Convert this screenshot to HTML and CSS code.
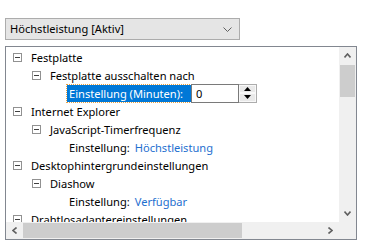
FILE: index.html
```html
<!DOCTYPE html>
<html lang="de">
<head>
  <meta charset="UTF-8">
  <meta name="viewport" content="width=device-width, initial-scale=1.0">
  <title>Energieoptionen</title>
  <link rel="stylesheet" href="styles.css">
</head>
<body>
  <div class="panel">
    <!-- Energiesparplan Auswahl -->
    <div class="combo">
      <span class="combo-text">Höchstleistung [Aktiv]</span>
      <svg class="combo-arrow" width="9" height="5" viewBox="0 0 9 5"><polyline points="0.5,0.5 4.5,4.5 8.5,0.5" fill="none" stroke="#606060"/></svg>
    </div>

    <!-- Einstellungsbaum -->
    <div class="tree">
      <div class="tree-view">
        <div class="row lvl0"><span class="exp"></span>Festplatte</div>
        <div class="row lvl1"><span class="exp"></span>Festplatte ausschalten nach</div>
        <div class="row lvl2 edit-row">
          <span class="selected">Einstellung (Minuten):</span>
          <span class="spin-input">0</span>
          <span class="spin-buttons">
            <span class="spin-btn"><svg width="7" height="4" viewBox="0 0 7 4"><polygon points="3.5,0 7,4 0,4" fill="#000"/></svg></span>
            <span class="spin-btn"><svg width="7" height="4" viewBox="0 0 7 4"><polygon points="0,0 7,0 3.5,4" fill="#000"/></svg></span>
          </span>
        </div>
        <div class="row lvl0"><span class="exp"></span>Internet Explorer</div>
        <div class="row lvl1"><span class="exp"></span>JavaScript-Timerfrequenz</div>
        <div class="row lvl2">Einstellung: <a class="value">Höchstleistung</a></div>
        <div class="row lvl0"><span class="exp"></span>Desktophintergrundeinstellungen</div>
        <div class="row lvl1"><span class="exp"></span>Diashow</div>
        <div class="row lvl2">Einstellung: <a class="value">Verfügbar</a></div>
        <div class="row lvl0"><span class="exp"></span>Drahtlosadaptereinstellungen</div>
      </div>

      <div class="vscroll">
        <div class="sb-btn"><svg width="7" height="5" viewBox="0 0 7 5"><polyline points="0.5,4.5 3.5,1 6.5,4.5" fill="none" stroke="#606060" stroke-width="1.6"/></svg></div>
        <div class="vthumb"></div>
        <div class="sb-fill"></div>
        <div class="sb-btn"><svg width="7" height="5" viewBox="0 0 7 5"><polyline points="0.5,0.5 3.5,4 6.5,0.5" fill="none" stroke="#606060" stroke-width="1.6"/></svg></div>
      </div>

      <div class="hscroll">
        <div class="sb-btn"><svg width="5" height="7" viewBox="0 0 5 7"><polyline points="4.5,0.5 1,3.5 4.5,6.5" fill="none" stroke="#606060" stroke-width="1.6"/></svg></div>
        <div class="hthumb"></div>
        <div class="sb-fill"></div>
        <div class="sb-btn"><svg width="5" height="7" viewBox="0 0 5 7"><polyline points="0.5,0.5 4,3.5 0.5,6.5" fill="none" stroke="#606060" stroke-width="1.6"/></svg></div>
      </div>

      <div class="corner"></div>
    </div>
  </div>
</body>
</html>
```

FILE: styles.css
```css
body {
  margin: 0;
  padding: 0;
  background-color: #ffffff;
  font-family: "Noto Sans", "Segoe UI", sans-serif;
  font-size: 11.1px;
  color: #000000;
}

.panel {
  padding: 18px 0 0 5px;
}

/* Dropdown */
.combo {
  box-sizing: border-box;
  width: 235px;
  height: 22px;
  background-color: #e5e5e5;
  border: 1px solid #acacac;
  display: flex;
  align-items: center;
  justify-content: space-between;
  padding: 0 7px 0 4px;
}

.combo-text {
  line-height: 20px;
}

/* Tree */
.tree {
  box-sizing: border-box;
  margin-top: 6px;
  width: 352px;
  height: 194px;
  border: 1px solid #828790;
  display: grid;
  grid-template-columns: 1fr 17px;
  grid-template-rows: 1fr 17px;
}

.tree-view {
  overflow: hidden;
  padding-top: 1px;
}

.row {
  height: 18px;
  display: flex;
  align-items: center;
  white-space: nowrap;
}

.lvl0 {
  padding-left: 7px;
}

.lvl1 {
  padding-left: 26px;
}

.lvl2 {
  padding-left: 63px;
}

.exp {
  box-sizing: border-box;
  width: 9px;
  height: 9px;
  border: 1px solid #919191;
  margin-right: 9px;
  position: relative;
  flex-shrink: 0;
}

.exp::after {
  content: "";
  position: absolute;
  left: 1px;
  top: 3px;
  width: 5px;
  height: 1px;
  background-color: #404040;
}

.value {
  color: #1e6fcf;
  margin-left: 5px;
}

/* Editing row */
.edit-row {
  padding-left: 61px;
  height: 18px;
}

.selected {
  box-sizing: border-box;
  width: 124px;
  background-color: #0078d7;
  color: #ffffff;
  padding: 0 2px;
  line-height: 17px;
  outline: 1px dotted #e8a040;
}

.spin-input {
  box-sizing: border-box;
  width: 48px;
  height: 19px;
  border: 1px solid #7a7a7a;
  padding-left: 4px;
  line-height: 17px;
}

.spin-buttons {
  box-sizing: border-box;
  height: 19px;
  width: 18px;
  display: flex;
  flex-direction: column;
  border: 1px solid #acacac;
  border-left: none;
}

.spin-btn {
  flex: 1;
  display: flex;
  align-items: center;
  justify-content: center;
  background-color: #e9e9e9;
  border: 1px solid #f8f8f8;
}

/* Scrollbars */
.vscroll,
.hscroll,
.corner {
  background-color: #f0f0f0;
}

.vscroll {
  display: flex;
  flex-direction: column;
}

.hscroll {
  display: flex;
}

.sb-btn {
  width: 17px;
  height: 17px;
  flex-shrink: 0;
  display: flex;
  align-items: center;
  justify-content: center;
}

.sb-fill {
  flex: 1;
}

.vthumb {
  margin: 1px 1px 0 1px;
  height: 32px;
  background-color: #cdcdcd;
}

.hthumb {
  margin: 1px 0 1px 0;
  width: 219px;
  background-color: #cdcdcd;
}
```
